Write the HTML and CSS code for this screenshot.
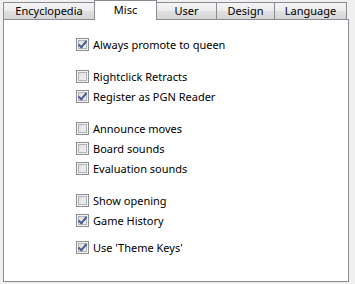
FILE: index.html
```html
<!DOCTYPE html>
<html lang="en">
<head>
    <meta charset="UTF-8">
    <title>Options - Misc</title>
    <link rel="stylesheet" href="styles.css">
</head>
<body>
    <div class="tabs">
        <div class="tab">Encyclopedia</div>
        <div class="tab active">Misc</div>
        <div class="tab">User</div>
        <div class="tab">Design</div>
        <div class="tab">Language</div>
    </div>

    <div class="panel">
        <div class="group">
            <label class="option"><span class="box checked"></span>Always promote to queen</label>
        </div>
        <div class="group">
            <label class="option"><span class="box"></span>Rightclick Retracts</label>
            <label class="option"><span class="box checked"></span>Register as PGN Reader</label>
        </div>
        <div class="group">
            <label class="option"><span class="box"></span>Announce moves</label>
            <label class="option"><span class="box"></span>Board sounds</label>
            <label class="option"><span class="box"></span>Evaluation sounds</label>
        </div>
        <div class="group">
            <label class="option"><span class="box"></span>Show opening</label>
            <label class="option"><span class="box checked"></span>Game History</label>
        </div>
        <div class="group last">
            <label class="option"><span class="box checked"></span>Use 'Theme Keys'</label>
        </div>
    </div>
</body>
</html>
```

FILE: styles.css
```css
body {
    margin: 0;
    background-color: #f0f0f0;
    font-family: "Noto Sans", sans-serif;
    font-size: 11px;
    color: #000;
}
.tabs {
    display: flex;
    align-items: flex-end;
    height: 19px;
    padding-left: 3px;
    position: relative;
    z-index: 1;
}
.tab {
    box-sizing: border-box;
    height: 17px;
    border: 1px solid #898c95;
    border-bottom: none;
    border-left: none;
    background: linear-gradient(#f4f4f4, #ececec 50%, #e0e0e0 51%, #d6d6d6);
    line-height: 16px;
    text-align: center;
}
.tab:first-child {
    border-left: 1px solid #898c95;
    width: 92px;
}
.tab:nth-child(2) { width: 63px; }
.tab:nth-child(3) { width: 60px; }
.tab:nth-child(4) { width: 58px; }
.tab:nth-child(5) { width: 72px; }
.tab.active {
    height: 20px;
    margin-bottom: -1px;
    margin-left: -1px;
    background: #fff;
    border-left: 1px solid #898c95;
    line-height: 17px;
}
.panel {
    box-sizing: border-box;
    height: 263px;
    margin: 0 6px 0 3px;
    background: #fff;
    border: 1px solid #898c95;
    padding: 14px 0 0 72px;
}
.group {
    display: flex;
    flex-direction: column;
    margin-bottom: 12px;
}
.group.last {
    margin-top: -5px;
}
.option {
    display: flex;
    align-items: center;
    height: 20px;
    white-space: nowrap;
}
.box {
    box-sizing: border-box;
    width: 13px;
    height: 13px;
    margin-right: 4px;
    border: 1px solid #8e8f8f;
    background: linear-gradient(135deg, #dcdcdc, #f6f6f6);
    box-shadow: inset 0 0 0 1px #f4f4f4, inset 0 0 0 2px #aeb3b9;
    position: relative;
}
.box.checked::after {
    content: "";
    position: absolute;
    left: 3px;
    top: 0px;
    width: 3px;
    height: 7px;
    border: solid #4a5f97;
    border-width: 0 2px 2px 0;
    transform: rotate(40deg);
}
```
